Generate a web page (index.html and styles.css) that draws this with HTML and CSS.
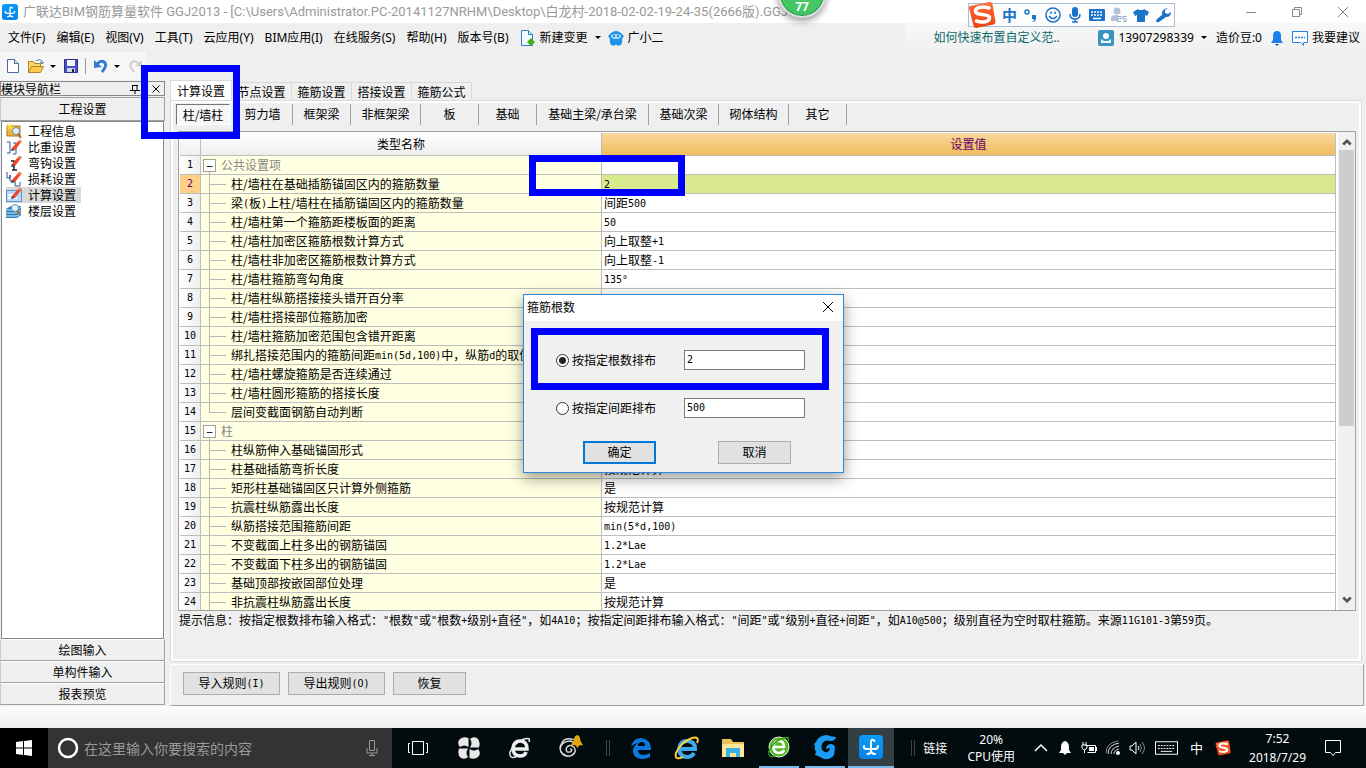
FILE: index.html
```html
<!DOCTYPE html>
<html lang="zh-CN">
<head>
<meta charset="utf-8">
<title>广联达BIM钢筋算量软件 GGJ2013</title>
<link rel="stylesheet" href="styles.css">
</head>
<body>
<svg class="defs" aria-hidden="true">
  <defs>
    <linearGradient id="blueTile" x1="0" y1="0" x2="0" y2="1"><stop offset="0" stop-color="#0b9bf5"/><stop offset="1" stop-color="#0583ea"/></linearGradient>
    <linearGradient id="orangeTile" x1="0" y1="0" x2="0" y2="1"><stop offset="0" stop-color="#ff6a35"/><stop offset="1" stop-color="#ea4310"/></linearGradient>
    <symbol id="app" viewBox="0 0 24 24"><rect width="24" height="24" rx="4" fill="url(#blueTile)"/><path d="M15.500 6Q12 3 12 7.500V16q0 3-3.500 3M5 11q-1 3 3 3h8q3 0 3-3M12 15q0 4 4 4" fill="none" stroke="#fff" stroke-width="2" stroke-linecap="round"/></symbol>
    <symbol id="sogou" viewBox="0 0 28 28"><path d="M2 5 22 1q2 0 2.500 2l3 18q0 2-2 2.500L8 27q-2 0-2.500-2L1 7q0-1.500 1-2Z" fill="url(#orangeTile)"/><path d="M21 7C15 5 8 6 7.500 10c-.5 5 13 2 14 6.500C22 21 14 22 8.500 20" fill="none" stroke="#fff" stroke-width="3.500" stroke-linecap="round"/></symbol>
    <symbol id="pencil" viewBox="0 0 16 16"><path d="m6 9 7-8 3 1-7 9Z" fill="#f2452c"/><path d="m12 2 3 1" stroke="#ff9c86"/><path d="m6 9 3 2-4 1Z" fill="#333"/></symbol>
  </defs>
</svg>

<header class="titlebar">
  <svg class="i16" viewBox="0 0 24 24"><use href="#app"/></svg>
  <h1>广联达BIM钢筋算量软件 GGJ2013 - [C:\Users\Administrator.PC-20141127NRHM\Desktop\白龙村-2018-02-02-19-24-35(2666版).GGJ12]</h1>
  <div class="winbtns">
    <button aria-label="最小化"><svg viewBox="0 0 12 12"><path d="M1 6.500h10"/></svg></button>
    <button aria-label="还原"><svg viewBox="0 0 12 12"><path d="M1.500 3.500h7v7h-7zM3.500 3.500v-2h7v7h-2"/></svg></button>
    <button aria-label="关闭"><svg viewBox="0 0 12 12"><path d="m1 1 10 10M11 1 1 11"/></svg></button>
  </div>
</header>
<div class="bubble">77</div>
<div class="ime">
  <svg class="ime-logo" viewBox="0 0 28 28"><use href="#sogou"/></svg>
  <b>中</b>
  <svg viewBox="0 0 16 16"><circle cx="4" cy="5" r="2" fill="none" stroke="#1b73c9" stroke-width="1.500"/><path d="M9 8h4v4q-1 3-4 3 2-1 2-3H9Z" fill="#1b73c9"/></svg>
  <svg viewBox="0 0 16 16"><g fill="none" stroke="#1b73c9" stroke-width="1.500"><circle cx="8" cy="8" r="7"/><path d="M4 9q4 5 8 0M6 4.500v2.500M10 4.500v2.500"/></g></svg>
  <svg viewBox="0 0 16 16"><rect x="5" y="0" width="6" height="10" rx="3" fill="#1b73c9"/><path d="M3 7q0 5 5 5t5-5M8 12v3M5 15h6" fill="none" stroke="#1b73c9" stroke-width="1.500"/></svg>
  <svg viewBox="0 0 16 16"><rect y="2" width="16" height="12" rx="1" fill="#1b73c9"/><path d="M2 5h12M2 8h12" stroke="#fff" stroke-width="1.500" stroke-dasharray="2 1"/><path d="M4 11.500h8" stroke="#fff" stroke-width="1.500"/></svg>
  <svg viewBox="0 0 16 16"><circle cx="6" cy="4" r="3.500" fill="#b4c3da"/><path d="M0 14V11q0-3 5-3h2v6Z" fill="#b4c3da"/><path d="M6 9.500h4v2.500H6.500v2.500H10M15.500 9.500H12v2.500h3v2.500h-3" fill="none" stroke="#93a8c8"/></svg>
  <svg viewBox="0 0 16 16"><path d="m5 2 1 1h4l1-1 5 3-2 4-2-1v7H4V8L2 9 0 5Z" fill="#1b73c9"/></svg>
  <svg viewBox="0 0 16 16"><path d="M13 1 10 3v3l3 1 3-2q0 5-5 5L4 15q-2 1-3-1 0-1 1-2l5-4q-1-6 6-7Z" fill="#1b73c9"/></svg>
</div>

<nav class="menubar">
  <button>文件(F)</button><button>编辑(E)</button><button>视图(V)</button><button>工具(T)</button><button>云应用(Y)</button><button>BIM应用(I)</button><button>在线服务(S)</button><button>帮助(H)</button><button>版本号(B)</button>
  <button class="with-icon"><svg class="i16" viewBox="0 0 16 16"><path d="M1.500.500h7l4 4v11h-11Z" fill="#f2f9ff" stroke="#2583c6"/><path d="M8.500.500v4h4" fill="#b9dcf5" stroke="#2583c6"/><path d="m11 8 4 4-4 4-4-4Z" fill="#46ad1c"/></svg>新建变更<i class="caret"></i></button>
  <button class="with-icon"><svg class="i16" viewBox="0 0 16 16"><path d="M3 3Q8-1 13 3l3 3-2 3q1 5-2 6.500H9.500L8 14.500l-1.500 1H4Q1 14 2 9L0 6Z" fill="#1f93ea"/><path d="M3 5q5-2 10 0 1 4-5 4T3 5Z" fill="#9fdcff"/><circle cx="6" cy="6" r="1" fill="#0d5c99"/><circle cx="10" cy="6" r="1" fill="#0d5c99"/></svg>广小二</button>
  <div class="account">
    <a class="tip" href="#tip">如何快速布置自定义范..</a>
    <button class="with-icon"><svg class="i16" viewBox="0 0 16 16"><rect width="16" height="16" rx="2" fill="#3a93c2"/><circle cx="8" cy="6" r="3" fill="#fff"/><path d="M3 9v4h10V9l-3 2H6Z" fill="#e9f6fd"/></svg>13907298339<i class="caret"></i></button>
    <span class="beans">造价豆:0</span>
    <svg class="bell" viewBox="0 0 12 16"><path d="M6 1Q2 1 2 6v4l-2 3h12l-2-3V6Q10 1 6 1Z" fill="#1b7ff0"/><path d="M4 14h4l-2 2Z" fill="#174d9b"/></svg>
    <button class="with-icon"><svg class="i16" viewBox="0 0 16 16"><path d="M.500 1.500h15v11h-4v3l-3-3h-8Z" fill="#fff" stroke="#2b7de1"/><path d="M3 7.500h10" stroke="#2b7de1" stroke-width="1.500" stroke-dasharray="2 1"/></svg>我要建议</button>
  </div>
</nav>

<div class="toolbar">
  <button aria-label="新建"><svg class="i16" viewBox="0 0 16 16"><path d="M2.500 1.500h7l4 4v9h-11Z" fill="#fff" stroke="#4b6c98"/><path d="M9.500 1.500v4h4" fill="#cfdef0" stroke="#4b6c98"/></svg></button>
  <button aria-label="打开" class="open"><svg class="i16" viewBox="0 0 16 16"><path d="M.500 14.500v-11h5l1 2h6v3" fill="#f6d56b" stroke="#b68622"/><path d="m.500 14.500 3-6h12l-3 6Z" fill="#ffc94a" stroke="#b68622"/><path d="M8 3q3-3 6 0v2M12 4l2 2 2-2" fill="none" stroke="#4b83a8"/></svg><i class="caret"></i></button>
  <button aria-label="保存" class="save"><svg class="i16" viewBox="0 0 16 16"><path d="M1.500 1.500h13v13h-13Z" fill="#4a4fc4" stroke="#2a3192"/><path d="M4 2h8v6H4Z" fill="#f3f6ff"/><path d="M4 10h8v4H4Z" fill="#cdd5ee"/><path d="M9 11h2v3H9Z" fill="#223"/></svg></button>
  <button aria-label="撤销" class="undo"><svg class="i16" viewBox="0 0 16 16"><path d="M4 6q4-4 7-2 4 3-2 10" fill="none" stroke="#3578d8" stroke-width="3"/><path d="M1 2v8l8-1Z" fill="#3578d8"/></svg><i class="caret"></i></button>
  <button aria-label="重做"><svg class="i16" viewBox="0 0 16 16"><path d="M12 6Q8 2 5 4q-4 3 2 10" fill="none" stroke="#d0d0d0" stroke-width="2"/><path d="M15 2v7l-7-1Z" fill="#d0d0d0"/></svg></button>
</div>

<div class="workspace">
  <aside class="sidebar">
    <div class="side-title"><span>模块导航栏</span><svg class="pin" viewBox="0 0 10 10"><path d="M2.500 1v5M7 1v5M2 1.500h6M0 6.500h10M5 7v3" stroke="#000" fill="none"/></svg><button aria-label="关闭导航栏"><svg viewBox="0 0 8 8"><path d="m.500.500 7 7M7.500.500l-7 7" stroke="#000"/></svg></button></div>
    <button class="side-btn first">工程设置</button>
    <ul class="tree">
      <li><svg class="i16" viewBox="0 0 16 16"><path d="M1 3h13v10H1Z" fill="#edb43b" stroke="#a8761d"/><path d="M4 0v8M0 4h8M1 1l6 6M7 1 1 7" stroke="#ffe34d"/><circle cx="10" cy="8" r="3.500" fill="#dff1ff" stroke="#7890a8"/><path d="m12 11 3 4" stroke="#ae6828" stroke-width="2"/></svg>工程信息</li>
      <li><svg class="i16" viewBox="0 0 16 16"><path d="M1 3h3v11H1M7 4h3v11H7" fill="none" stroke="#30558f"/><use href="#pencil"/></svg>比重设置</li>
      <li><svg class="i16" viewBox="0 0 16 16"><path d="M5 6h3v9M6 15h5" fill="none" stroke="#222" stroke-width="1.500"/><use href="#pencil"/></svg>弯钩设置</li>
      <li><svg class="i16" viewBox="0 0 16 16"><path d="M1 1v6h3V4v6h5v5h5v-4" fill="none" stroke="#30558f"/><use href="#pencil"/></svg>损耗设置</li>
      <li class="sel"><svg class="i16" viewBox="0 0 16 16"><rect x=".5" y="3.500" width="15" height="11" fill="#b9d8fa" stroke="#5d8fc9"/><path d="M2 8h6M2 11h9" stroke="#fff" stroke-width="2"/><use href="#pencil"/></svg>计算设置</li>
      <li><svg class="i16" viewBox="0 0 16 16"><path d="m0 6 5-3h10v9l-4 3H0Z" fill="#2c7fba"/><path d="M0 7h11l4-3M0 10h11l4-3M0 13h11l4-3" stroke="#c9edff" fill="none"/><circle cx="9" cy="5" r="3.500" fill="#e2f3ff" stroke="#7890a8"/><path d="m11 8 3 3" stroke="#ae6828" stroke-width="2"/></svg>楼层设置</li>
    </ul>
    <button class="side-btn">绘图输入</button>
    <button class="side-btn">单构件输入</button>
    <button class="side-btn">报表预览</button>
  </aside>

  <main class="main">
    <div class="tabs"><button class="on">计算设置</button><button>节点设置</button><button>箍筋设置</button><button>搭接设置</button><button>箍筋公式</button></div>
    <section class="pane">
      <div class="subtabs"><button class="on">柱/墙柱</button><button class="w60">剪力墙</button><button class="w58">框架梁</button><button class="w70">非框架梁</button><button class="w58">板</button><button class="w58">基础</button><button class="w112">基础主梁/承台梁</button><button class="w70">基础次梁</button><button class="w70">砌体结构</button><button class="w58">其它</button></div>
      <div class="grid">
        <div class="grid-view">
        <table>
          <colgroup><col class="c-no"><col class="c-name"><col></colgroup>
          <thead><tr><th></th><th>类型名称</th><th class="val">设置值</th></tr></thead>
          <tbody>
            <tr class="group"><th>1</th><td><button aria-label="折叠">−</button>公共设置项</td><td></td></tr>
            <tr class="cur"><th>2</th><td>柱/墙柱在基础插筋锚固区内的箍筋数量</td><td class="mark-host"><span class="m">2</span><div class="mark mark-cell"></div></td></tr>
            <tr><th>3</th><td>梁<span class="m">(</span>板<span class="m">)</span>上柱/墙柱在插筋锚固区内的箍筋数量</td><td>间距<span class="m">500</span></td></tr>
            <tr><th>4</th><td>柱/墙柱第一个箍筋距楼板面的距离</td><td><span class="m">50</span></td></tr>
            <tr><th>5</th><td>柱/墙柱加密区箍筋根数计算方式</td><td>向上取整<span class="m">+1</span></td></tr>
            <tr><th>6</th><td>柱/墙柱非加密区箍筋根数计算方式</td><td>向上取整<span class="m">-1</span></td></tr>
            <tr><th>7</th><td>柱/墙柱箍筋弯勾角度</td><td><span class="m">135°</span></td></tr>
            <tr><th>8</th><td>柱/墙柱纵筋搭接接头错开百分率</td><td></td></tr>
            <tr><th>9</th><td>柱/墙柱搭接部位箍筋加密</td><td></td></tr>
            <tr><th>10</th><td>柱/墙柱箍筋加密范围包含错开距离</td><td></td></tr>
            <tr><th>11</th><td>绑扎搭接范围内的箍筋间距<span class="m">min(5d,100)</span>中，纵筋<span class="m">d</span>的取值</td><td></td></tr>
            <tr><th>12</th><td>柱/墙柱螺旋箍筋是否连续通过</td><td></td></tr>
            <tr><th>13</th><td>柱/墙柱圆形箍筋的搭接长度</td><td></td></tr>
            <tr class="last"><th>14</th><td>层间变截面钢筋自动判断</td><td></td></tr>
            <tr class="group"><th>15</th><td><button aria-label="折叠">−</button>柱</td><td></td></tr>
            <tr><th>16</th><td>柱纵筋伸入基础锚固形式</td><td></td></tr>
            <tr><th>17</th><td>柱基础插筋弯折长度</td><td>按规范计算</td></tr>
            <tr><th>18</th><td>矩形柱基础锚固区只计算外侧箍筋</td><td>是</td></tr>
            <tr><th>19</th><td>抗震柱纵筋露出长度</td><td>按规范计算</td></tr>
            <tr><th>20</th><td>纵筋搭接范围箍筋间距</td><td><span class="m">min(5*d,100)</span></td></tr>
            <tr><th>21</th><td>不变截面上柱多出的钢筋锚固</td><td><span class="m">1.2*Lae</span></td></tr>
            <tr><th>22</th><td>不变截面下柱多出的钢筋锚固</td><td><span class="m">1.2*Lae</span></td></tr>
            <tr><th>23</th><td>基础顶部按嵌固部位处理</td><td>是</td></tr>
            <tr><th>24</th><td>非抗震柱纵筋露出长度</td><td>按规范计算</td></tr>
          </tbody>
        </table>
        </div>
        <div class="scroll"><svg viewBox="0 0 8 6"><path d="m1 5 3-3 3 3"/></svg><div class="thumb"></div><svg class="down" viewBox="0 0 8 6"><path d="m1 1 3 3 3-3"/></svg></div>
      </div>
      <p class="hint">提示信息：按指定根数排布输入格式：<span class="m">"</span>根数<span class="m">"</span>或<span class="m">"</span>根数<span class="m">+</span>级别<span class="m">+</span>直径<span class="m">"</span>，如<span class="m">4A10</span>；按指定间距排布输入格式：<span class="m">"</span>间距<span class="m">"</span>或<span class="m">"</span>级别<span class="m">+</span>直径<span class="m">+</span>间距<span class="m">"</span>，如<span class="m">A10@500</span>；级别直径为空时取柱箍筋。来源<span class="m">11G101-3</span>第<span class="m">59</span>页。</p>
    </section>
    <div class="actions"><button class="btn wide">导入规则<span class="m">(I)</span></button><button class="btn wide">导出规则<span class="m">(O)</span></button><button class="btn">恢复</button></div>
    <div class="mark mark-tab"></div>
  </main>
</div>

<div class="status"></div>

<form class="dialog" role="dialog" aria-label="箍筋根数">
  <div class="dlg-title"><span>箍筋根数</span><button type="button" aria-label="关闭"><svg viewBox="0 0 12 12"><path d="m1 1 10 10M11 1 1 11" stroke="#000"/></svg></button></div>
  <div class="dlg-body">
    <div class="opt"><input type="radio" name="mode" id="r1" checked><label for="r1">按指定根数排布</label><input type="text" class="m" aria-label="根数" value="2"></div>
    <div class="opt"><input type="radio" name="mode" id="r2"><label for="r2">按指定间距排布</label><input type="text" class="m" aria-label="间距" value="500"></div>
    <div class="dlg-btns"><button type="button" class="btn ok">确定</button><button type="button" class="btn">取消</button></div>
  </div>
  <div class="mark mark-opt"></div>
</form>

<footer class="taskbar">
  <button class="start" aria-label="开始"><svg class="i16" viewBox="0 0 16 16"><path d="m0 2 7-1v6.500H0ZM8 1l8-1v7.500H8ZM0 8.500h7V15l-7-1ZM8 8.500h8V16l-8-1Z" fill="#fff"/></svg></button>
  <div class="search"><svg class="i22" viewBox="0 0 22 22"><circle cx="11" cy="11" r="9" fill="none" stroke="#fff" stroke-width="2.500"/></svg><input type="text" aria-label="搜索" placeholder="在这里输入你要搜索的内容"><svg class="i16" viewBox="0 0 16 16"><path d="M5.500.500h5v10h-5ZM3 8v5h10V8M8 13v3M5 15.500h6" fill="none" stroke="#9a9a9a"/></svg></div>
  <div class="apps">
    <button class="tv" aria-label="任务视图"><svg class="i22" viewBox="0 0 22 22"><path d="M5.500 4.500h11v13h-11ZM3 6.500H1.500v9H3M19 6.500h1.500v9H19" fill="none" stroke="#fff"/></svg></button>
    <button aria-label="风车"><svg class="i22" viewBox="0 0 22 22"><g fill="#e8e8e8"><path d="M10.500 1v9Q6 7 2 10-1 7 1 3q3-4 9.500-2Z"/><path d="M21 10.500h-9Q15 6 12 2q3-3 7-1 4 3 2 9.500Z"/><path d="M11.500 21v-9q4.500 3 8.500 0 3 3 1 7-3 4-9.500 2Z"/><path d="M1 11.500h9Q7 16 10 20q-3 3-7 1-4-3-2-9.500Z"/></g></svg></button>
    <button aria-label="浏览器"><svg class="i22" viewBox="0 0 22 22"><path d="M4 12h14q0-8-7-8-6 0-7 7 0 8 7 8 5 0 6-4" fill="none" stroke="#eee" stroke-width="3.500"/><path d="M20 5q2-5-5-3Q5 6 1 15q-1 7 6 5" fill="none" stroke="#eee" stroke-width="1.500"/></svg></button>
    <button aria-label="提醒"><svg class="i28" viewBox="0 0 28 28"><path d="M19 10Q14 4 7 8q-6 4-4 10 4 7 12 4 6-4 2-9-5-4-8 1-1 6 5 4 2-3-1-3M17 5Q7 2 4 9 0 15 5 20q7 6 13-1" fill="none" stroke="#ddd" stroke-width="1.500"/><path d="M21 0q-4 1-4 6l-3 5h13l-3-5q0-5-3-6Zm-2 11h4l-2 3Z" fill="#e3a60c"/></svg></button>
    <i class="grip"></i>
    <button aria-label="Edge"><svg class="i22" viewBox="0 0 22 22"><path d="M1 10Q3 1 11 1q10 1 10 12H8q0 5 6 5 3 0 6-2v4q-3 2-8 2-9-1-9-8 0-5 5-8-5 1-7 4Zm7-1h7q0-4-3-4-4 0-4 4Z" fill="#0b79dc"/></svg></button>
    <button aria-label="Internet Explorer"><svg class="i28" viewBox="0 0 26 26"><path d="M6 14h15q0-8-8-8-7 0-8 8 1 8 8 8 5 0 7-4" fill="none" stroke="#3fa9ee" stroke-width="4"/><path d="M23 8q3-7-5-5Q7 7 2 18q-2 8 7 4" fill="none" stroke="#f5cf31" stroke-width="2"/></svg></button>
    <button aria-label="文件资源管理器"><svg class="i22" viewBox="0 0 22 22"><path d="M0 2h9l2 3h11v15H0Z" fill="#e9c35a"/><path d="M0 7h22v13H0Z" fill="#ffe798"/><path d="M4 20v-9h14v9h-4v-4H8v4Z" fill="#38b0e6"/></svg></button>
    <button class="run" aria-label="安全浏览器"><svg class="i22" viewBox="0 0 22 22"><circle cx="11" cy="11" r="10" fill="#53b927" stroke="#e8f8df"/><path d="M6 11h10q0-6-5-6-5 0-6 6 1 6 6 6 4 0 5-3" fill="none" stroke="#fff" stroke-width="2.500"/><path d="M20 5q2-5-5-3Q5 6 1 15q-1 7 6 5" fill="none" stroke="#38981a" stroke-width="1.500"/></svg></button>
    <button class="run" aria-label="广联达"><svg class="i28" viewBox="0 0 26 26"><path d="M24 3q-1 4-5 4-7-2-9 3-2 6 3 8 4 1 5-4l-4 1q0-4 4-5 5 0 5 4l-1 7q-3 5-10 4l-6-3-3-1 1-3q-2-3-1-6l-1-2 2-2Q7 1 15 1q5 2 9 2Z" fill="#1c9bf4"/></svg></button>
    <button class="run active" aria-label="钢筋算量"><svg class="i24" viewBox="0 0 24 24"><use href="#app"/></svg></button>
  </div>
  <div class="tray">
    <i class="grip"></i><span class="links">链接</span>
    <div class="cpu">20%<br>CPU使用</div>
    <svg viewBox="0 0 16 16"><path d="m2 11 6-6 6 6" stroke="#fff" fill="none" stroke-width="1.500"/></svg>
    <svg viewBox="0 0 16 16"><path d="M8 1Q4 2 4 7v3l-2 3h12l-2-3V7q0-5-4-6ZM6 13h4l-2 2Z" fill="#fff"/></svg>
    <svg viewBox="0 0 16 16"><path d="M4.500 5.500h10v7h-8M15.500 7v4M1 5h5v3l-2 2H3L1 8ZM2 5V2M5 5V2M3.500 10v3" stroke="#fff" fill="none"/><path d="M8 7h5v4H8Z" fill="#fff"/></svg>
    <svg viewBox="0 0 16 16"><path d="M3 14Q3 5 14 3M6 14q0-6 8-8M9 14q0-4 5-5" stroke="#ddd" fill="none"/><path d="M1 13Q1 3 13 1" stroke="#888" fill="none"/><circle cx="13" cy="13" r="2" fill="#fff"/></svg>
    <svg viewBox="0 0 16 16"><path d="M1 6h2l4-4v12l-4-4H1ZM9 6q2 2 0 4" stroke="#fff" fill="none"/><path d="M11 4q3 4 0 8M13 2q5 6 0 12" stroke="#888" fill="none"/></svg>
    <svg class="kbd" viewBox="0 0 24 14"><rect x=".5" y=".5" width="23" height="13" fill="none" stroke="#fff"/><path d="M3 4.500h18M3 7.500h18" stroke="#fff" stroke-dasharray="2 1"/><path d="M6 10.500h12" stroke="#fff"/></svg>
    <span class="zh">中</span>
    <svg viewBox="0 0 28 28"><use href="#sogou"/></svg>
    <div class="clock">7:52<br>2018/7/29</div>
    <button class="notice" aria-label="通知"><svg class="i16" viewBox="0 0 16 16"><path d="M.500.500h15v12h-5l-2.500 3-2.500-3h-5Z" fill="none" stroke="#fff"/></svg></button>
  </div>
</footer>
</body>
</html>
```
FILE: styles.css
```css
* { box-sizing: border-box; }
body {
  margin: 0; height: 100vh; display: flex; flex-direction: column; overflow: hidden; position: relative;
  background: #efefef; color: #000;
  font: 12px/16px "Noto Sans CJK SC", sans-serif;
}
button { font: inherit; color: inherit; background: none; border: 0; padding: 0; }
svg { display: block; flex: none; }
.defs { position: absolute; width: 0; height: 0; }
.i16 { width: 16px; height: 16px; }
.i22 { width: 22px; height: 22px; }
.i24 { width: 24px; height: 24px; }
.i28 { width: 26px; height: 26px; }
.m { font-family: "DejaVu Sans Mono", monospace; font-size: 10px; line-height: 10px; vertical-align: 1px; }
.caret { border: 3px solid transparent; border-top-color: #000; border-bottom: 0; }

.titlebar { height: 23px; flex: none; display: flex; align-items: center; gap: 5px; padding-left: 2px; background: #fff; }
.titlebar h1 { margin: 0; flex: 1; min-width: 0; overflow: hidden; white-space: nowrap; color: #999; font: 13px/20px Roboto, "Noto Sans CJK SC", sans-serif; }
.winbtns { display: flex; }
.winbtns button { width: 46px; display: flex; justify-content: center; }
.winbtns svg { width: 12px; height: 12px; fill: none; stroke: #888; }
.bubble {
  position: absolute; top: -30px; left: 778px; width: 48px; height: 48px; border-radius: 50%;
  padding-top: 27px; text-align: center; color: #fff; font: bold 12px/16px "Open Sans", sans-serif;
  background: #43c663; border: 2px solid #ddd; box-shadow: inset 0 0 0 1px #23924a, 0 3px 7px #0006;
}
.ime { position: absolute; top: 3px; left: 968px; width: 207px; height: 24px; display: flex; align-items: center; gap: 6px; border: 1px solid #a9bdd6; background: #fdfdfe; z-index: 1; }
.ime svg { width: 16px; height: 16px; }
.ime .ime-logo { width: 28px; height: 28px; margin-left: -1px; }
.ime b { color: #1b73c9; font-size: 15px; }

.menubar { height: 29px; flex: none; display: flex; align-items: center; gap: 11px; padding-left: 8px; font-family: "Noto Sans", "Noto Sans CJK SC", sans-serif; white-space: nowrap; }
.with-icon { display: flex; align-items: center; gap: 4px; }
.with-icon .caret { margin-left: 3px; }
.with-icon + .with-icon { margin-left: -4px; }
.account { margin-left: auto; display: flex; align-items: center; gap: 9px; padding-right: 6px; height: 29px; background: linear-gradient(#f8f8f8, #f0f0f0); }
.tip { color: #0b6b6b; text-decoration: none; width: 184px; padding-left: 28px; }
.bell { width: 12px; height: 16px; }

.toolbar { height: 28px; flex: none; display: flex; align-items: center; align-self: flex-start; gap: 7px; padding: 0 3px 0 5px; background: #f6f6f6; }
.toolbar button { display: flex; align-items: center; gap: 6px; }
.save { padding-right: 6px; border-right: 1px solid #999; }
.toolbar .undo { gap: 5px; }

.workspace { flex: 1; min-height: 0; display: flex; gap: 5px; padding-right: 2px; }
.sidebar { width: 165px; flex: none; display: flex; flex-direction: column; padding-top: 1px; }
.side-title { height: 15px; margin-bottom: 1px; display: flex; align-items: center; border: 1px solid #888; }
.side-title span { flex: 1; }
.side-title button { margin-left: 7px; padding: 3px 4px; border-left: 1px solid #bbb; }
.side-title button svg { width: 8px; height: 8px; }
.pin { width: 10px; height: 10px; }
.side-btn { height: 22px; flex: none; border: 1px solid; border-color: #fff #a0a0a0 #a0a0a0 #ccc; text-align: center; }
.side-btn.first { height: 24px; border-top-color: #a0a0a0; }
.side-btn:last-child { margin-bottom: 1px; }
.tree { flex: 1; min-height: 0; margin: 0 1px; padding: 1px 4px; list-style: none; background: #fff; border: 1px solid #828790; }
.tree li { display: flex; align-items: center; gap: 6px; height: 16px; width: 75px; white-space: nowrap; }
.tree .sel { background: #d9d9d9; }

.main { flex: 1; min-width: 0; display: flex; flex-direction: column; position: relative; }
.tabs { height: 20px; flex: none; display: flex; align-items: flex-end; }
.tabs button { width: 60px; height: 18px; border: 1px solid #d9d9d9; border-width: 1px 1px 0 0; }
.tabs .on { width: 62px; height: 20px; background: #fff; border-left-width: 1px; }
.pane { flex: 1; min-height: 0; display: flex; flex-direction: column; padding: 1px 5px 0; border: 1px solid #d9d9d9; box-shadow: inset 0 0 0 2px #fff; margin-right: 2px; }
.subtabs { height: 29px; flex: none; display: flex; align-items: flex-start; padding-top: 2px; }
.subtabs button { height: 21px; padding-bottom: 2px; border-right: 1px solid #a0a0a0; }
.subtabs .on { width: 54px; margin-right: 3px; padding: 0; border: 1px solid; border-color: #777 #fff #fff #777; background: #f7f7f7; }
.w58 { width: 58px; } .w60 { width: 60px; } .w70 { width: 70px; } .w112 { width: 112px; }

.grid { flex: 1; min-height: 0; display: flex; margin-left: 2px; border: 1px solid #a0a0a0; background: #fff; }
.grid-view { flex: 1; min-width: 0; padding: 1px 0 0 1px; overflow: hidden; }
table { width: 100%; table-layout: fixed; border-collapse: separate; border-spacing: 0; }
.c-no { width: 21px; } .c-name { width: 401px; }
th, td { height: 19px; padding: 0 0 0 2px; border: 1px solid #bdbdbd; border-width: 0 1px 1px 0; line-height: 18px; text-align: left; font-weight: 400; white-space: nowrap; }
thead th { height: 23px; padding: 0; text-align: center; background: linear-gradient(#fff, #eee); }
thead .val { color: #600060; background: linear-gradient(#fad7a0, #efbd5c); }
tbody th { padding: 0; text-align: center; background: linear-gradient(90deg, #fff, #eee); font: 10px/18px "DejaVu Sans Mono", monospace; }
td:nth-child(2) {
  padding-left: 30px; background-color: #ffffe1; overflow: hidden;
  background-image: linear-gradient(#b5b5b5, #b5b5b5), linear-gradient(#b5b5b5, #b5b5b5);
  background-repeat: no-repeat; background-size: 1px 100%, 16px 1px; background-position: 8px 0, 9px 9px;
}
.last td:nth-child(2) { background-size: 1px 10px, 16px 1px; }
.group td:nth-child(2) { padding-left: 2px; color: #888; background-size: 1px 4px, 0 0; background-position: 8px 100%, 0 0; }
.group button { display: inline-block; width: 13px; height: 13px; margin: 3px 5px 0 0; border: 1px solid #a0a0a0; background: #fff; color: #000; line-height: 10px; vertical-align: top; }
.cur th { background: #ffd08a; color: #600060; }
.cur td:last-child { background: #d9ea8e; }
.mark-host { position: relative; }
.scroll { width: 17px; flex: none; margin-left: 2px; display: flex; flex-direction: column; align-items: center; background: #f0f0f0; padding: 6px 0; }
.scroll svg { width: 10px; height: 8px; fill: none; stroke: #505050; stroke-width: 2; }
.thumb { width: 15px; height: 276px; margin-top: 4px; background: #cdcdcd; }
.down { margin-top: auto; }
.hint { height: 50px; flex: none; margin: 0; padding: 1px 0 0 3px; white-space: nowrap; }
.actions { height: 42px; flex: none; margin-top: 2px; display: flex; align-items: flex-start; gap: 8px; padding: 7px 12px; border: 1px solid; border-color: #fff #a0a0a0 #a0a0a0 #fff; }
.btn { width: 73px; height: 23px; padding-bottom: 1px; background: #e1e1e1; border: 1px solid #adadad; }
.btn.wide { width: 97px; }

.mark { position: absolute; border: 7px solid #00f; pointer-events: none; }
.mark-tab { left: -29px; top: -15px; width: 99px; height: 74px; }
.mark-cell { left: -73px; top: -20px; width: 156px; height: 41px; z-index: 1; }
.mark-opt { left: 7px; top: 33px; width: 298px; height: 62px; }

.dialog { position: absolute; z-index: 2; left: calc(50% - 160px); top: calc(50% - 90px); width: 321px; background: #f0f0f0; border: 1px solid #2a8ae2; box-shadow: 0 5px 14px #0006; }
.dlg-title { height: 26px; padding: 0 9px 2px 3px; display: flex; align-items: center; justify-content: space-between; background: #fff; }
.dlg-title svg { width: 12px; height: 12px; }
.dlg-body { padding: 29px 38px 8px 32px; }
.opt { display: flex; align-items: center; height: 20px; margin-bottom: 28px; }
.opt input[type=radio] { width: 13px; height: 13px; margin: 0 3px 0 0; appearance: none; border: 1px solid #333; border-radius: 50%; background: #fff; }
.opt input[type=radio]:checked { background: radial-gradient(circle, #222 0 3px, #fff 4px); }
.opt label { flex: 1; }
.opt input[type=text] { width: 121px; height: 20px; padding: 0 2px 2px; border: 1px solid #7a7a7a; background: #fff; }
.dlg-btns { display: flex; gap: 62px; padding: 0 13px 0 27px; margin-top: -5px; }
.ok { border: 2px solid #0078d7; }

.status { height: 22px; flex: none; background: linear-gradient(#fcfcfc, #f1f1f1); }
.taskbar { height: 40px; flex: none; display: flex; background: #020b0e; color: #fff; }
.taskbar button { display: flex; align-items: center; justify-content: center; }
.start { width: 48px; background: #000; }
.search { width: 344px; display: flex; align-items: center; gap: 5px; padding: 0 12px 0 9px; background: #333; }
.search input { flex: 1; min-width: 0; border: 0; padding: 0; background: none; font: 14px/20px "Noto Sans CJK SC", sans-serif; }
.search input::placeholder { color: #999; opacity: 1; }
.apps { display: flex; }
.apps button { width: 46px; }
.apps button:nth-of-type(-n+4) { width: 51px; }
.apps .tv { width: 48px; }
.apps .grip { margin: auto 8px auto 10px; }
.run { border-bottom: 2px solid #76b9ed; background-clip: padding-box; }
.run:not(.active) { border-image: linear-gradient(90deg, #0000 5px, #76b9ed 5px 41px, #0000 41px) 2; }
.active { background-color: #333f43; }
.grip { width: 4px; height: 16px; margin: auto 10px; border: 1px solid #444; border-width: 0 1px; }
.tray { margin-left: auto; display: flex; align-items: center; gap: 8px; white-space: nowrap; }
.tray > svg { width: 16px; height: 16px; }
.tray .kbd { width: 23px; height: 14px; margin-left: 2px; }
.tray .grip { margin: 0; }
.links { margin-right: 12px; }
.cpu, .clock { text-align: center; font: 12px/17px "Noto Sans", "Noto Sans CJK SC", sans-serif; }
.cpu { margin-right: 10px; }
.zh { font-size: 13px; margin: 0 4px; }
.clock { line-height: 19px; margin: 0 2px 0 10px; }
.notice { width: 34px; margin-right: 16px; }
```
